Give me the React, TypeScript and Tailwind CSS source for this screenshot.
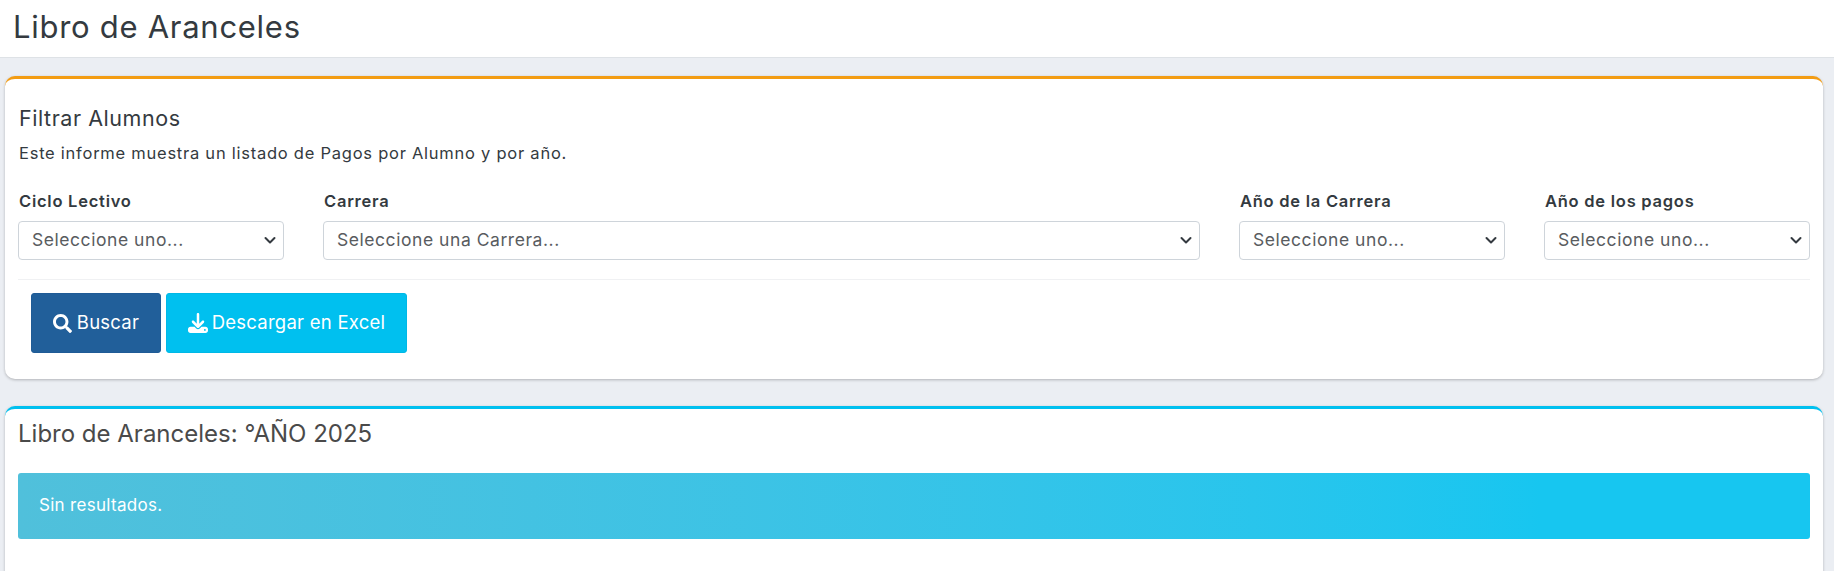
import { FaSearch } from "react-icons/fa";
import { FaDownload } from "react-icons/fa6";

const font = "font-['Inter','Noto_Sans',sans-serif]";

function Field({ label, value, className }: { label: string; value: string; className: string }) {
  return (
    <div className={className}>
      <label className="block h-[26px] pl-px text-[16.5px] leading-[24px] font-semibold tracking-[0.75px] text-[#333a40]">{label}</label>
      <div className="relative mt-[6px]">
        <select className="block h-[39px] w-full appearance-none rounded-[4px] border border-[#ced4da] bg-white pl-[13px] pr-8 text-[17.5px] tracking-[0.55px] text-[#595c5f] outline-none">
          <option>{value}</option>
        </select>
        <svg viewBox="0 0 16 16" className="pointer-events-none absolute right-[6px] top-[11px] h-4 w-4" fill="none" stroke="#343a40" strokeWidth="2" strokeLinecap="round" strokeLinejoin="round">
          <path d="M3.5 6l4.5 4.5L12.5 6" />
        </svg>
      </div>
    </div>
  );
}

export default function App() {
  return (
    <div className={`${font} h-[571px] overflow-hidden bg-[#ebeef3] text-[#343a40]`}>
      <header className="h-[58px] border-b border-[#dee2e6] bg-white pl-[13px] pt-[7px]">
        <h1 className="text-[31px] leading-[40px] font-normal tracking-[0.72px] text-[#343a40]">Libro de Aranceles</h1>
      </header>

      <div className="pl-[5px] pr-[11px] pt-[18px]">
        <section className="h-[303px] rounded-[10px] border-t-[3px] border-[#f39c12] bg-white px-[13px] pt-[27px] shadow-[0_1px_3px_rgba(0,0,0,0.25)]">
          <h2 className="h-[35px] pl-px text-[21.5px] leading-[24px] font-normal tracking-[0.55px] text-[#343a40]">Filtrar Alumnos</h2>
          <p className="h-[48px] pl-px text-[16.5px] leading-[24px] tracking-[0.75px] text-[#343a40]">Este informe muestra un listado de Pagos por Alumno y por año.</p>
          <div className="flex gap-[39px]">
            <Field label="Ciclo Lectivo" value="Seleccione uno..." className="w-[266px]" />
            <Field label="Carrera" value="Seleccione una Carrera..." className="flex-1" />
            <Field label="Año de la Carrera" value="Seleccione uno..." className="w-[266px]" />
            <Field label="Año de los pagos" value="Seleccione uno..." className="w-[266px]" />
          </div>
          <hr className="mt-[19px] border-t border-[#f0f1f3]" />
          <div className="flex gap-[5px] pl-[13px] pt-[13px]">
            <button className="flex h-[60px] w-[130px] items-center justify-center gap-[5px] rounded-[3px] border border-[#1f5b96] bg-[#215f9a] text-[18.5px] tracking-[0.25px] text-white">
              <FaSearch className="h-[19px] w-[19px]" />
              Buscar
            </button>
            <button className="flex h-[60px] w-[241px] items-center justify-center gap-[4px] rounded-[3px] border border-[#00b8e6] bg-[#00c0ef] text-[18.5px] tracking-[0.25px] text-white">
              <FaDownload className="h-[20px] w-[20px]" />
              Descargar en Excel
            </button>
          </div>
        </section>

        <section className="mt-[27px] h-[300px] rounded-[10px] border-t-[3px] border-[#00c0ef] bg-white px-[13px] pt-[8px] shadow-[0_1px_3px_rgba(0,0,0,0.25)]">
          <h2 className="h-[56px] text-[24px] leading-[34px] font-normal text-[#4a4a4a]">Libro de Aranceles: °AÑO 2025</h2>
          <div className="flex h-[66px] items-center rounded-[3px] bg-gradient-to-r from-[#50c0db] to-[#17c6f0] to-[85%] pl-[21px] text-[17px] tracking-[0.3px] text-white">
            Sin resultados.
          </div>
        </section>
      </div>
    </div>
  );
}
